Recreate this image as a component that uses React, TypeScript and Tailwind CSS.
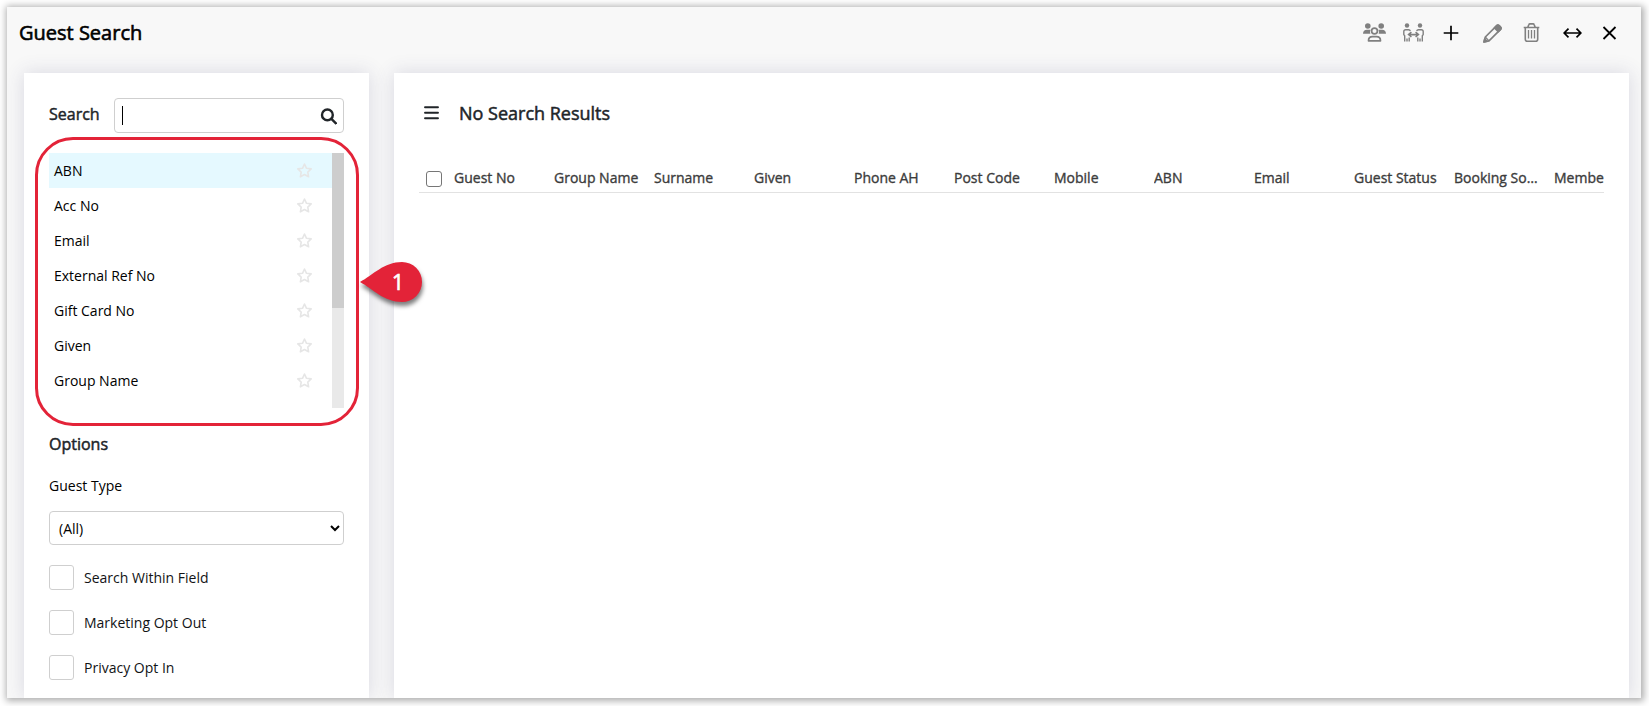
import type { ReactNode } from "react";

const fields = ["ABN", "Acc No", "Email", "External Ref No", "Gift Card No", "Given", "Group Name"];

const columns = [
  "Guest No",
  "Group Name",
  "Surname",
  "Given",
  "Phone AH",
  "Post Code",
  "Mobile",
  "ABN",
  "Email",
  "Guest Status",
  "Booking Source",
  "Member No",
];

const options = ["Search Within Field", "Marketing Opt Out", "Privacy Opt In"];

export default function App() {
  return (
    <main className="h-[706px] w-[1649px] overflow-hidden bg-white p-[7px] pb-2 pr-2 font-['Open_Sans',sans-serif] text-sm text-black">
      <div className="h-[691px] bg-[#f8f8f8] shadow-[1px_1px_7px_2px_rgba(0,0,0,0.32)]">
        <div className="flex h-full flex-col overflow-hidden">
          <Header />
          <div className="flex flex-1 gap-[25px] pl-[17px] pr-3">
            <SearchPanel />
            <ResultsPanel />
          </div>
        </div>
      </div>
    </main>
  );
}

function Header() {
  return (
    <header className="flex h-[66px] shrink-0 items-start justify-between pl-3 pr-6">
      <h1 className="mt-[11px] text-[20px] leading-[30px] [-webkit-text-stroke:0.6px_black]">Guest Search</h1>
      <div className="mt-[15px] flex items-center text-[#808080]">
        <IconBox className="w-[23px]">
          <GroupIcon />
        </IconBox>
        <IconBox className="ml-4 w-[23px]">
          <DistanceIcon />
        </IconBox>
        <IconBox className="ml-[18px] w-4 text-black">
          <svg width="16" height="16" viewBox="0 0 16 16" stroke="currentColor" strokeWidth="1.7">
            <path d="M8 .7v14.600M.7 8h14.600" />
          </svg>
        </IconBox>
        <IconBox className="ml-[23px] w-5">
          <PencilIcon />
        </IconBox>
        <IconBox className="ml-[21px] w-[17px]">
          <TrashIcon />
        </IconBox>
        <IconBox className="ml-[23px] w-[19px] text-black">
          <svg width="19" height="12" viewBox="0 0 19 12" fill="none" stroke="currentColor" strokeWidth="1.7">
            <path d="M1.5 6h16M5.5 1.7L1.2 6l4.3 4.3M13.5 1.7L17.8 6l-4.3 4.3" />
          </svg>
        </IconBox>
        <IconBox className="ml-5 w-[15px] text-black">
          <svg className="-mt-px" width="15" height="14" viewBox="0 0 15 14" stroke="currentColor" strokeWidth="1.8">
            <path d="M1.5 1l12 12M13.5 1l-12 12" />
          </svg>
        </IconBox>
      </div>
    </header>
  );
}

function IconBox({ className, children }: { className: string; children: ReactNode }) {
  return <button type="button" className={`flex h-[22px] items-center justify-center ${className}`}>{children}</button>;
}

function SearchPanel() {
  return (
    <section className="relative w-[345px] shrink-0 bg-white px-[25px] pt-[25px] shadow-[0_0_18px_rgba(60,60,110,0.17)]">
      <div className="flex h-[35px] items-center justify-between">
        <label className="mb-1 text-base text-[#212529] [-webkit-text-stroke:0.45px_#212529]">Search</label>
        <div className="flex h-[35px] w-[230px] items-center justify-between rounded border border-[#cfcfcf] pl-[7px] pr-1.5">
          <span className="h-[19px] w-px bg-black" />
          <svg className="mt-px" width="17" height="17" viewBox="0 0 17 17" fill="none" stroke="#212529" strokeWidth="2.4">
            <circle cx="7.4" cy="6.9" r="5.4" />
            <path d="M11.400 10.900l5 5" />
          </svg>
        </div>
      </div>
      <div className="mt-5 flex h-[255px]">
        <ul className="w-[283px]">
          {fields.map((field, i) => (
            <li
              key={field}
              className={`flex h-[35px] items-center justify-between pl-[5px] pr-5 ${i === 0 ? "bg-[#e5f9ff]" : ""}`}
            >
              <span>{field}</span>
              <StarIcon />
            </li>
          ))}
        </ul>
        <div className="w-3 bg-[#e9e9e9]">
          <div className="h-[155px] bg-[#cdcdcd]" />
        </div>
      </div>
      <h2 className="mt-6 text-base leading-6 text-[#212529] [-webkit-text-stroke:0.5px_#212529]">Options</h2>
      <p className="mt-5 leading-5">Guest Type</p>
      <div className="mt-[15px] flex h-[34px] items-center justify-between rounded border border-[#cfcfcf] pl-[9px] pr-[3px]">
        <span className="mt-0.5">(All)</span>
        <svg width="10" height="7" viewBox="0 0 10 7" fill="none" stroke="black" strokeWidth="2">
          <path d="M1 1l4 4 4-4" />
        </svg>
      </div>
      <div className="mt-5 space-y-5">
        {options.map((option) => (
          <label key={option} className="flex h-[25px] items-center gap-2.5 text-[#111315]">
            <span className="size-[25px] rounded-[3px] border border-[#cfcfcf]" />
            {option}
          </label>
        ))}
      </div>

      {/* numbered callout over the field list */}
      <div className="absolute left-[11px] top-16 h-[289px] w-[324px] rounded-[38px] border-[3px] border-[#e32338]" />
      <div className="absolute left-[335px] top-[188px] z-10 h-[42px] w-[64px]">
        <svg className="overflow-visible drop-shadow-[1px_4px_2px_rgba(0,0,0,0.5)]" width="64" height="42" viewBox="0 0 64 42">
          <path d="M1 21C14 14 25 1 43 1a20 20 0 0 1 0 40C25 41 14 28 1 21z" fill="#e32338" />
        </svg>
        <span className="absolute left-[33px] top-[7px] text-[21px] leading-7 text-white [-webkit-text-stroke:0.7px_white]">1</span>
      </div>
    </section>
  );
}

function ResultsPanel() {
  return (
    <section className="w-[1235px] bg-white px-[25px] pt-[26px] shadow-[0_0_18px_rgba(60,60,110,0.17)]">
      <div className="flex h-7 items-center pl-[5px] text-[#212529]">
        <svg width="15" height="14" viewBox="0 0 15 14" stroke="currentColor" strokeWidth="1.9" strokeLinecap="round">
          <path d="M1 1.200h13M1 6.700h13M1 12.200h13" />
        </svg>
        <h2 className="ml-5 text-lg leading-7 [-webkit-text-stroke:0.5px_#212529]">No Search Results</h2>
      </div>
      <div className="mt-[37px] flex h-[29px] overflow-hidden border-b border-[#e2e2e2] text-[#3c3c3c]">
        <span className="ml-[7px] mt-[7px] size-4 shrink-0 rounded-[3px] border border-[#767676]" />
        <div className="ml-3 flex">
          {columns.map((column, i) => (
            <span
              key={column}
              className={`mt-1 w-[100px] shrink-0 overflow-hidden whitespace-nowrap pr-[15px] leading-5 [-webkit-text-stroke:0.35px_#3c3c3c] ${
                i === 11 ? "text-clip" : "text-ellipsis"
              }`}
            >
              {column}
            </span>
          ))}
        </div>
      </div>
    </section>
  );
}

function StarIcon() {
  return (
    <svg className="mb-px" width="15" height="15" viewBox="0 0 15 15" fill="none" stroke="#e6e6e6" strokeWidth="1.6" strokeLinejoin="round">
      <path d="M7.5 1l2 4.300 4.700.6-3.400 3.200.8 4.700-4.100-2.300-4.100 2.300.8-4.700L.8 5.900l4.700-.6z" />
    </svg>
  );
}

function GroupIcon() {
  return (
    <svg className="-mt-px" width="23" height="19" viewBox="0 0 23 19" fill="currentColor">
      <circle cx="4.800" cy="3" r="2.800" />
      <circle cx="18.200" cy="3" r="2.800" />
      <path d="M0 10.800c0-2.600 1.600-4.100 4-4.100h3.600A5 5 0 0 0 7.400 10.800zM23 10.800c0-2.600-1.600-4.100-4-4.100h-3.600a5 5 0 0 1 .2 4.100z" />
      <circle cx="11.500" cy="8" r="2.900" fill="none" stroke="currentColor" strokeWidth="1.700" />
      <path d="M5.500 17.800c0-2.600 1.700-4.200 4-4.200h4c2.300 0 4 1.600 4 4.200z" fill="none" stroke="currentColor" strokeWidth="1.700" strokeLinejoin="round" />
    </svg>
  );
}

function DistanceIcon() {
  return (
    <svg className="-mt-px" width="21" height="19" viewBox="0 0 21 19" fill="none" stroke="currentColor" strokeWidth="1.400">
      <circle cx="4" cy="2.500" r="2.200" fill="currentColor" stroke="none" />
      <circle cx="17" cy="2.500" r="2.200" fill="currentColor" stroke="none" />
      <path d="M1.700 18.500v-5.700L.8 11.600V8.500c0-1.200.7-1.800 1.900-1.800h2.800c1 0 1.600.5 1.800 1.300M4 18.500v-3M6.200 18.500v-4" />
      <path d="M19.300 18.500v-5.700l.9-1.200V8.500c0-1.200-.7-1.800-1.900-1.800h-2.800c-1 0-1.600.5-1.800 1.300M17 18.500v-3M14.800 18.500v-4" />
      <path d="M5.500 11.600h10M8.400 9.200L5.600 11.600l2.800 2.400M12.600 9.200l2.800 2.400-2.800 2.400" strokeWidth="1.600" />
    </svg>
  );
}

function PencilIcon() {
  return (
    <svg width="19" height="19" viewBox="0 0 19 19" fill="none" stroke="currentColor" strokeWidth="1.700" strokeLinejoin="round">
      <path d="M1 18l1.300-5L13.500 1.800c.8-.8 2-.8 2.800 0l1 1c.8.8.8 2 0 2.800L6 16.800z" />
      <path d="M2.300 13L6 16.800" strokeWidth="1.200" />
      <path d="M11.500 3.800l2-2c.8-.8 2-.8 2.800 0l1 1c.8.8.8 2 0 2.800l-2 2zM1 18l.8-2.900 2.100 2.100z" fill="currentColor" />
    </svg>
  );
}

function TrashIcon() {
  return (
    <svg className="-mt-px" width="17" height="19" viewBox="0 0 17 19" fill="none" stroke="currentColor" strokeWidth="1.600">
      <path d="M.7 4.500h15.600M4.800 4.300l1-2.500c.2-.6.6-.9 1.200-.9h3c.6 0 1 .3 1.200.9l1 2.500M2.300 4.500v11.700c0 1.200.8 2 2 2h8.400c1.200 0 2-.8 2-2V4.500" />
      <path d="M5.500 7v8.500M8.500 7v8.500M11.500 7v8.500" strokeWidth="1.300" />
    </svg>
  );
}
